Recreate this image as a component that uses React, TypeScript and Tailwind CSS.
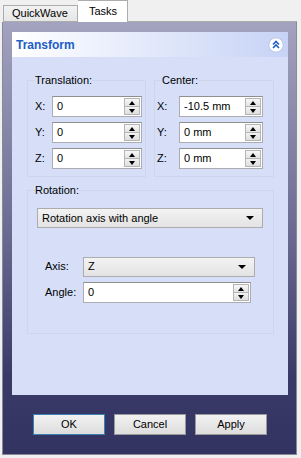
import React from "react";

const font = "font-['Liberation_Sans',Arial,sans-serif]";

const Spin = () => (
  <div className="flex flex-col w-[16px] my-[1px] mr-[1px] border border-[#b5b5b5] bg-[#e6e6e6]">
    <div className="flex-1 flex items-center justify-center border-b border-[#b5b5b5] bg-gradient-to-b from-[#f7f7f7] to-[#e4e4e4]">
      <div className="w-0 h-0 border-x-[3px] border-x-transparent border-b-[4px] border-b-black" />
    </div>
    <div className="flex-1 flex items-center justify-center bg-gradient-to-b from-[#f2f2f2] to-[#dedede]">
      <div className="w-0 h-0 border-x-[3px] border-x-transparent border-t-[4px] border-t-black" />
    </div>
  </div>
);

const SpinBox = ({ value, className }: { value: string; className: string }) => (
  <div className={`flex h-[21px] bg-white border border-[#abadb3] border-t-[#8e8f8f] ${className}`}>
    <div className="flex-1 flex items-center pl-[4px] leading-none">{value}</div>
    <Spin />
  </div>
);

const Combo = ({ value, className }: { value: string; className: string }) => (
  <div
    className={`flex items-center h-[20px] border border-[#acacac] bg-gradient-to-b from-[#f3f3f3] to-[#e3e3e3] pl-[4px] pr-[8px] ${className}`}
  >
    <span className="flex-1 leading-none">{value}</span>
    <div className="w-0 h-0 border-x-[4px] border-x-transparent border-t-[4px] border-t-black" />
  </div>
);

const Row = ({ label, labelW, children }: { label: string; labelW: string; children: React.ReactNode }) => (
  <div className="flex items-center h-[21px]">
    <span className={`${labelW} shrink-0 leading-none`}>{label}</span>
    {children}
  </div>
);

const Button = ({ label, primary }: { label: string; primary?: boolean }) => (
  <button
    className={`w-[72px] h-[21px] flex items-center justify-center border bg-gradient-to-b from-[#f2f2f2] to-[#dddddd] leading-none ${
      primary ? "border-[#3c7fb1]" : "border-[#9a9a9a]"
    }`}
  >
    {label}
  </button>
);

export default function App() {
  return (
    <div className={`w-[301px] h-[458px] bg-[#f0f0f0] text-[11px] text-black ${font}`}>
      {/* tabs */}
      <div className="flex items-end h-[22px] w-[297px]">
        <div className="w-[3px] h-px" />
        <div className="h-[17px] w-[75px] flex items-center pl-[8px] border border-[#acacac] bg-gradient-to-b from-[#f2f2f2] to-[#e6e6e6] leading-none">
          QuickWave
        </div>
        <div className="h-[22px] w-[50px] flex items-center pl-[11px] border border-b-0 border-l-0 border-[#acacac] bg-white leading-none">
          Tasks
        </div>
        <div className="flex-1 h-px bg-[#acacac]" />
      </div>

      {/* panel */}
      <div className="ml-[2px] w-[295px] h-[433px] border border-t-0 border-[#878a97] bg-[linear-gradient(to_bottom,#a3a3bf,#6f6f96_45%,#3a3a68_82%,#333362)] flex flex-col">
        <div className="mt-[10px] ml-[9px] w-[276px]">
          {/* header */}
          <div className="h-[25px] flex items-center justify-between pl-[4px] pr-[4px] bg-gradient-to-r from-[#ffffff] to-[#c7d3f6]">
            <span className="text-[12px] font-bold text-[#215dc6] leading-none">Transform</span>
            <svg width="16" height="16" viewBox="0 0 16 16">
              <circle cx="8" cy="8" r="7.2" fill="#ffffff" stroke="#b9c5e8" strokeWidth="1" />
              <polyline points="5,7.5 8,4.5 11,7.5" fill="none" stroke="#215dc6" strokeWidth="1.6" />
              <polyline points="5,11 8,8 11,11" fill="none" stroke="#215dc6" strokeWidth="1.6" />
            </svg>
          </div>

          {/* body */}
          <div className="h-[338px] bg-[#d6dff7] pt-[17px] pl-[15px] pr-[13px]">
            <div className="flex gap-[8px]">
              <fieldset className="w-[119px] min-w-0 border border-[#cdd5ef] pl-[7px] pr-[3px] pt-[10px] pb-[7px]">
                <legend className="leading-[12px] h-[12px] px-0 ml-0">Translation:</legend>
                <div className="flex flex-col gap-[5px]">
                  <Row label="X:" labelW="w-[17px]">
                    <SpinBox value="0" className="w-[90px]" />
                  </Row>
                  <Row label="Y:" labelW="w-[17px]">
                    <SpinBox value="0" className="w-[90px]" />
                  </Row>
                  <Row label="Z:" labelW="w-[17px]">
                    <SpinBox value="0" className="w-[90px]" />
                  </Row>
                </div>
              </fieldset>
              <fieldset className="w-[120px] min-w-0 border border-[#cdd5ef] pl-[2px] pr-[10px] pt-[10px] pb-[7px]">
                <legend className="leading-[12px] h-[12px] px-0 ml-[5px]">Center:</legend>
                <div className="flex flex-col gap-[5px]">
                  <Row label="X:" labelW="w-[22px]">
                    <SpinBox value="-10.5 mm" className="w-[84px]" />
                  </Row>
                  <Row label="Y:" labelW="w-[22px]">
                    <SpinBox value="0 mm" className="w-[84px]" />
                  </Row>
                  <Row label="Z:" labelW="w-[22px]">
                    <SpinBox value="0 mm" className="w-[84px]" />
                  </Row>
                </div>
              </fieldset>
            </div>

            <fieldset className="mt-[7px] w-[247px] min-w-0 border border-[#cdd5ef] pl-[9px] pr-[9px] pt-[12px] pb-[30px]">
              <legend className="leading-[12px] h-[12px] px-0 -ml-[2px]">Rotation:</legend>
              <Combo value="Rotation axis with angle" className="w-[226px]" />
              <div className="mt-[28px] pl-[8px] flex flex-col gap-[5px]">
                <Row label="Axis:" labelW="w-[38px]">
                  <Combo value="Z" className="w-[172px]" />
                </Row>
                <Row label="Angle:" labelW="w-[38px]">
                  <SpinBox value="0" className="w-[168px]" />
                </Row>
              </div>
            </fieldset>
          </div>
        </div>

        {/* buttons */}
        <div className="mt-[19px] flex justify-center gap-[9px] pl-px">
          <Button label="OK" primary />
          <Button label="Cancel" />
          <Button label="Apply" />
        </div>
      </div>
    </div>
  );
}
